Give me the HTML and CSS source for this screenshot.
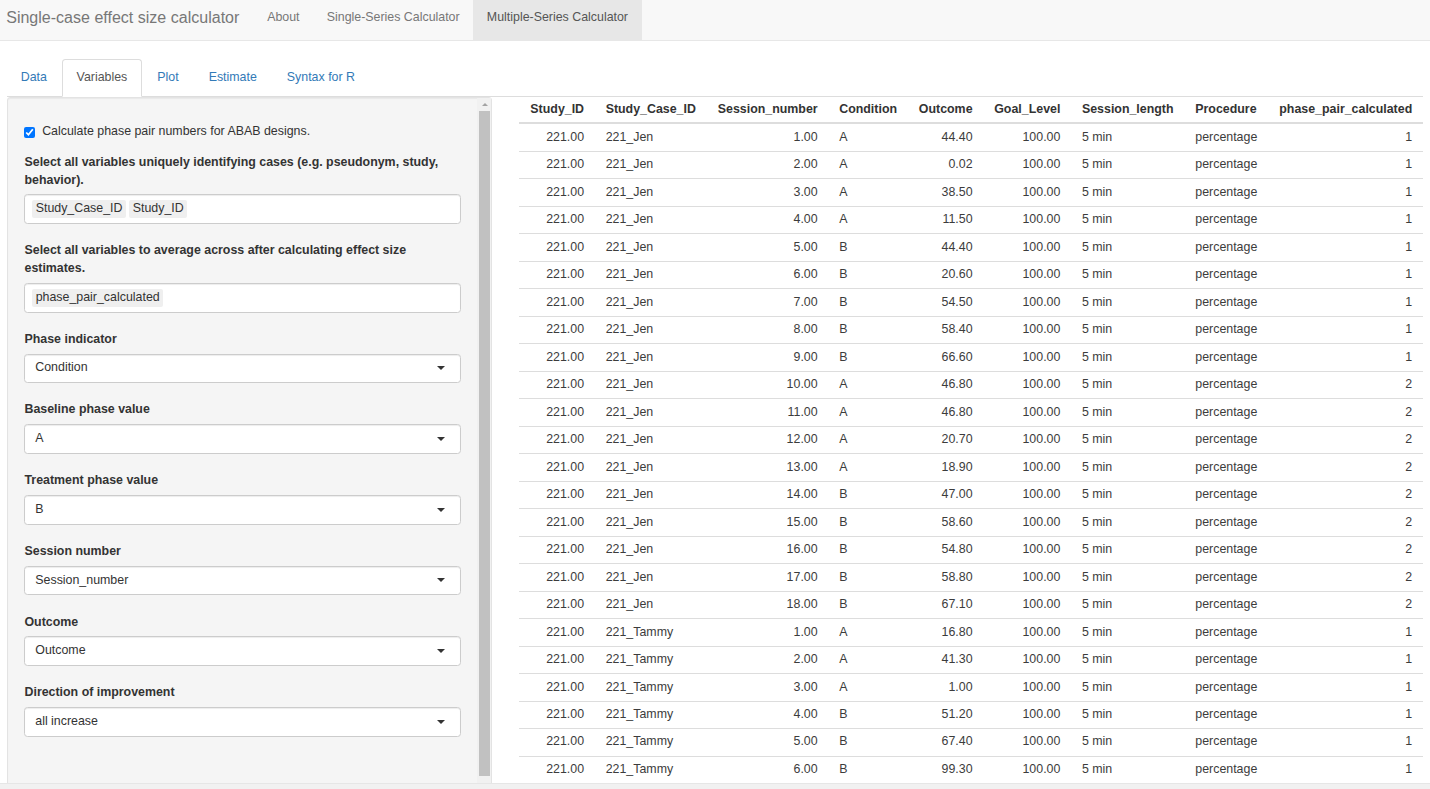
FILE: index.html
```html
<!DOCTYPE html>
<html lang="en">
<head>
<meta charset="utf-8">
<title>Single-case effect size calculator</title>
<link rel="stylesheet" href="styles.css">
</head>
<body>
<div class="page">
  <nav class="navbar">
    <span class="brand">Single-case effect size calculator</span>
    <ul class="nav">
      <li><a>About</a></li>
      <li><a>Single-Series Calculator</a></li>
      <li class="active"><a>Multiple-Series Calculator</a></li>
    </ul>
  </nav>

  <div class="container">
    <ul class="tabs">
      <li><a>Data</a></li>
      <li class="active"><a>Variables</a></li>
      <li><a>Plot</a></li>
      <li><a>Estimate</a></li>
      <li><a>Syntax for R</a></li>
    </ul>

    <div class="tab-content">
      <aside class="well">
        <div class="well-body">
          <label class="checkbox"><input type="checkbox" checked><span>Calculate phase pair numbers for ABAB designs.</span></label>

          <div class="form-group">
            <label class="control-label">Select all variables uniquely identifying cases (e.g. pseudonym, study, behavior).</label>
            <div class="select multi">
              <span class="chip">Study_Case_ID</span><span class="chip">Study_ID</span>
            </div>
          </div>

          <div class="form-group">
            <label class="control-label">Select all variables to average across after calculating effect size estimates.</label>
            <div class="select multi">
              <span class="chip">phase_pair_calculated</span>
            </div>
          </div>

          <div class="form-group">
            <label class="control-label">Phase indicator</label>
            <div class="select single"><span>Condition</span><span class="caret"></span></div>
          </div>

          <div class="form-group">
            <label class="control-label">Baseline phase value</label>
            <div class="select single"><span>A</span><span class="caret"></span></div>
          </div>

          <div class="form-group">
            <label class="control-label">Treatment phase value</label>
            <div class="select single"><span>B</span><span class="caret"></span></div>
          </div>

          <div class="form-group">
            <label class="control-label">Session number</label>
            <div class="select single"><span>Session_number</span><span class="caret"></span></div>
          </div>

          <div class="form-group">
            <label class="control-label">Outcome</label>
            <div class="select single"><span>Outcome</span><span class="caret"></span></div>
          </div>

          <div class="form-group">
            <label class="control-label">Direction of improvement</label>
            <div class="select single"><span>all increase</span><span class="caret"></span></div>
          </div>
        </div>
        <div class="vscroll">
          <div class="vs-arrow"><span class="vs-tri"></span></div>
          <div class="vs-thumb"></div>
        </div>
      </aside>

      <main class="main">
        <table class="data">
          <thead>
            <tr>
              <th class="num">Study_ID</th>
              <th class="txt">Study_Case_ID</th>
              <th class="num">Session_number</th>
              <th class="txt">Condition</th>
              <th class="num">Outcome</th>
              <th class="num">Goal_Level</th>
              <th class="txt">Session_length</th>
              <th class="txt">Procedure</th>
              <th class="num">phase_pair_calculated</th>
            </tr>
          </thead>
          <tbody>
            <tr><td class="num">221.00</td><td class="txt">221_Jen</td><td class="num">1.00</td><td class="txt">A</td><td class="num">44.40</td><td class="num">100.00</td><td class="txt">5 min</td><td class="txt">percentage</td><td class="num">1</td></tr>
            <tr><td class="num">221.00</td><td class="txt">221_Jen</td><td class="num">2.00</td><td class="txt">A</td><td class="num">0.02</td><td class="num">100.00</td><td class="txt">5 min</td><td class="txt">percentage</td><td class="num">1</td></tr>
            <tr><td class="num">221.00</td><td class="txt">221_Jen</td><td class="num">3.00</td><td class="txt">A</td><td class="num">38.50</td><td class="num">100.00</td><td class="txt">5 min</td><td class="txt">percentage</td><td class="num">1</td></tr>
            <tr><td class="num">221.00</td><td class="txt">221_Jen</td><td class="num">4.00</td><td class="txt">A</td><td class="num">11.50</td><td class="num">100.00</td><td class="txt">5 min</td><td class="txt">percentage</td><td class="num">1</td></tr>
            <tr><td class="num">221.00</td><td class="txt">221_Jen</td><td class="num">5.00</td><td class="txt">B</td><td class="num">44.40</td><td class="num">100.00</td><td class="txt">5 min</td><td class="txt">percentage</td><td class="num">1</td></tr>
            <tr><td class="num">221.00</td><td class="txt">221_Jen</td><td class="num">6.00</td><td class="txt">B</td><td class="num">20.60</td><td class="num">100.00</td><td class="txt">5 min</td><td class="txt">percentage</td><td class="num">1</td></tr>
            <tr><td class="num">221.00</td><td class="txt">221_Jen</td><td class="num">7.00</td><td class="txt">B</td><td class="num">54.50</td><td class="num">100.00</td><td class="txt">5 min</td><td class="txt">percentage</td><td class="num">1</td></tr>
            <tr><td class="num">221.00</td><td class="txt">221_Jen</td><td class="num">8.00</td><td class="txt">B</td><td class="num">58.40</td><td class="num">100.00</td><td class="txt">5 min</td><td class="txt">percentage</td><td class="num">1</td></tr>
            <tr><td class="num">221.00</td><td class="txt">221_Jen</td><td class="num">9.00</td><td class="txt">B</td><td class="num">66.60</td><td class="num">100.00</td><td class="txt">5 min</td><td class="txt">percentage</td><td class="num">1</td></tr>
            <tr><td class="num">221.00</td><td class="txt">221_Jen</td><td class="num">10.00</td><td class="txt">A</td><td class="num">46.80</td><td class="num">100.00</td><td class="txt">5 min</td><td class="txt">percentage</td><td class="num">2</td></tr>
            <tr><td class="num">221.00</td><td class="txt">221_Jen</td><td class="num">11.00</td><td class="txt">A</td><td class="num">46.80</td><td class="num">100.00</td><td class="txt">5 min</td><td class="txt">percentage</td><td class="num">2</td></tr>
            <tr><td class="num">221.00</td><td class="txt">221_Jen</td><td class="num">12.00</td><td class="txt">A</td><td class="num">20.70</td><td class="num">100.00</td><td class="txt">5 min</td><td class="txt">percentage</td><td class="num">2</td></tr>
            <tr><td class="num">221.00</td><td class="txt">221_Jen</td><td class="num">13.00</td><td class="txt">A</td><td class="num">18.90</td><td class="num">100.00</td><td class="txt">5 min</td><td class="txt">percentage</td><td class="num">2</td></tr>
            <tr><td class="num">221.00</td><td class="txt">221_Jen</td><td class="num">14.00</td><td class="txt">B</td><td class="num">47.00</td><td class="num">100.00</td><td class="txt">5 min</td><td class="txt">percentage</td><td class="num">2</td></tr>
            <tr><td class="num">221.00</td><td class="txt">221_Jen</td><td class="num">15.00</td><td class="txt">B</td><td class="num">58.60</td><td class="num">100.00</td><td class="txt">5 min</td><td class="txt">percentage</td><td class="num">2</td></tr>
            <tr><td class="num">221.00</td><td class="txt">221_Jen</td><td class="num">16.00</td><td class="txt">B</td><td class="num">54.80</td><td class="num">100.00</td><td class="txt">5 min</td><td class="txt">percentage</td><td class="num">2</td></tr>
            <tr><td class="num">221.00</td><td class="txt">221_Jen</td><td class="num">17.00</td><td class="txt">B</td><td class="num">58.80</td><td class="num">100.00</td><td class="txt">5 min</td><td class="txt">percentage</td><td class="num">2</td></tr>
            <tr><td class="num">221.00</td><td class="txt">221_Jen</td><td class="num">18.00</td><td class="txt">B</td><td class="num">67.10</td><td class="num">100.00</td><td class="txt">5 min</td><td class="txt">percentage</td><td class="num">2</td></tr>
            <tr><td class="num">221.00</td><td class="txt">221_Tammy</td><td class="num">1.00</td><td class="txt">A</td><td class="num">16.80</td><td class="num">100.00</td><td class="txt">5 min</td><td class="txt">percentage</td><td class="num">1</td></tr>
            <tr><td class="num">221.00</td><td class="txt">221_Tammy</td><td class="num">2.00</td><td class="txt">A</td><td class="num">41.30</td><td class="num">100.00</td><td class="txt">5 min</td><td class="txt">percentage</td><td class="num">1</td></tr>
            <tr><td class="num">221.00</td><td class="txt">221_Tammy</td><td class="num">3.00</td><td class="txt">A</td><td class="num">1.00</td><td class="num">100.00</td><td class="txt">5 min</td><td class="txt">percentage</td><td class="num">1</td></tr>
            <tr><td class="num">221.00</td><td class="txt">221_Tammy</td><td class="num">4.00</td><td class="txt">B</td><td class="num">51.20</td><td class="num">100.00</td><td class="txt">5 min</td><td class="txt">percentage</td><td class="num">1</td></tr>
            <tr><td class="num">221.00</td><td class="txt">221_Tammy</td><td class="num">5.00</td><td class="txt">B</td><td class="num">67.40</td><td class="num">100.00</td><td class="txt">5 min</td><td class="txt">percentage</td><td class="num">1</td></tr>
            <tr><td class="num">221.00</td><td class="txt">221_Tammy</td><td class="num">6.00</td><td class="txt">B</td><td class="num">99.30</td><td class="num">100.00</td><td class="txt">5 min</td><td class="txt">percentage</td><td class="num">1</td></tr>
          </tbody>
        </table>
      </main>
    </div>
  </div>

  <div class="hscroll"></div>
</div>
</body>
</html>
```

FILE: styles.css
```css
html, body {
  margin: 0;
  padding: 0;
  height: 100%;
  overflow: hidden;
}

body {
  font-family: "Liberation Sans", Arial, Helvetica, sans-serif;
  font-size: 12.4px;
  line-height: 17.7px;
  color: #333;
  background: #fff;
}

.page {
  height: 789px;
  display: flex;
  flex-direction: column;
}

/* ---------- navbar ---------- */
.navbar {
  flex: none;
  height: 40px;
  background: #f8f8f8;
  border-bottom: 1px solid #e7e7e7;
  display: flex;
}

.brand {
  display: flex;
  align-items: center;
  font-size: 16.05px;
  color: #777;
  padding: 0 14.2px 3.4px 6.2px;
}

.nav {
  list-style: none;
  margin: 0;
  padding: 0;
  display: flex;
}

.nav a {
  display: flex;
  align-items: center;
  height: 40px;
  box-sizing: border-box;
  padding: 0 13.6px 3.4px;
  color: #777;
}

.nav .active a {
  background: #e7e7e7;
  color: #555;
}

/* ---------- container / tabs ---------- */
.container {
  flex: 1;
  min-height: 0;
  display: flex;
  flex-direction: column;
  padding: 0 7px 0 6.7px;
}

.tabs {
  flex: none;
  list-style: none;
  margin: 18.3px 0 0;
  padding: 0;
  display: flex;
  border-bottom: 1px solid #ddd;
}

.tabs li {
  margin-bottom: -1px;
}

.tabs a {
  display: block;
  padding: 8.86px 13.3px;
  line-height: 17.7px;
  border: 1px solid transparent;
  border-radius: 3.5px 3.5px 0 0;
  margin-right: 1.4px;
  color: #337ab7;
}

.tabs li:first-child a {
  padding-left: 13px;
  padding-right: 13px;
}

.tabs .active a {
  color: #555;
  background: #fff;
  border-color: #ddd #ddd transparent;
}

.tab-content {
  flex: 1;
  min-height: 0;
  display: flex;
  overflow: hidden;
}

/* ---------- sidebar well ---------- */
.well {
  flex: none;
  width: 485.7px;
  box-sizing: border-box;
  background: #f5f5f5;
  border: 1px solid #e3e3e3;
  border-bottom: none;
  border-radius: 3.5px 3.5px 0 0;
  box-shadow: inset 0 1px 1px rgba(0, 0, 0, 0.05);
  display: flex;
}

.well-body {
  flex: 1;
  min-width: 0;
  padding: 25.6px 16.8px 0;
}

.checkbox {
  display: flex;
  align-items: center;
  margin-bottom: 13px;
  cursor: default;
}

.checkbox input {
  width: 11px;
  height: 11px;
  margin: 0 6.7px 0 0;
  accent-color: #0075ff;
}

.form-group {
  margin-bottom: 18.3px;
}

.control-label {
  display: block;
  font-weight: bold;
  margin-bottom: 5px;
}

.select {
  box-sizing: border-box;
  height: 29.7px;
  background: #fff;
  border: 1px solid #ccc;
  border-radius: 3.5px;
  box-shadow: inset 0 1px 1px rgba(0, 0, 0, 0.075);
  display: flex;
  align-items: center;
}

.select.single {
  justify-content: space-between;
  padding: 0 15px 0 9.8px;
}

.select.multi {
  padding: 0 6.8px;
  gap: 3.5px;
}

.chip {
  background: #efefef;
  line-height: 17.7px;
  padding: 0 3.4px;
  border-radius: 2px;
}

.caret {
  width: 0;
  height: 0;
  border-style: solid;
  border-width: 4.4px 4.2px 0;
  border-color: #333 transparent transparent;
}

/* fake vertical scrollbar of the sidebar */
.vscroll {
  flex: none;
  width: 14px;
  background: #f1f1f1;
  display: flex;
  flex-direction: column;
  align-items: flex-start;
  padding-left: 2px;
  box-sizing: border-box;
}

.vs-arrow {
  height: 13.3px;
  width: 10.7px;
  display: flex;
  align-items: center;
  justify-content: center;
}

.vs-tri {
  width: 0;
  height: 0;
  border-style: solid;
  border-width: 0 3px 3px;
  border-color: transparent transparent #a3a3a3;
}

.vs-thumb {
  width: 10.7px;
  height: 665px;
  background: #c1c1c1;
}

/* ---------- main table ---------- */
.main {
  flex: 1;
  min-width: 0;
  margin-left: 27.1px;
  overflow: hidden;
}

.data {
  width: 100%;
  border-collapse: separate;
  border-spacing: 0;
  white-space: nowrap;
}

.data th {
  font-weight: bold;
  padding: 4px 10.8px;
  line-height: 17.7px;
  border-bottom: 2px solid #ddd;
}

.data td {
  padding: 4.4px 10.8px;
  line-height: 17.7px;
  border-top: 1px solid #ddd;
  color: #3c3c3c;
}

.data tbody tr:first-child td {
  border-top: none;
}

.data .num {
  text-align: right;
}

.data .txt {
  text-align: left;
}

/* ---------- page horizontal scrollbar strip ---------- */
.hscroll {
  flex: none;
  height: 5.7px;
  background: #f1f1f1;
  border-top: 1px solid #e6e6e6;
  box-sizing: border-box;
}
```
